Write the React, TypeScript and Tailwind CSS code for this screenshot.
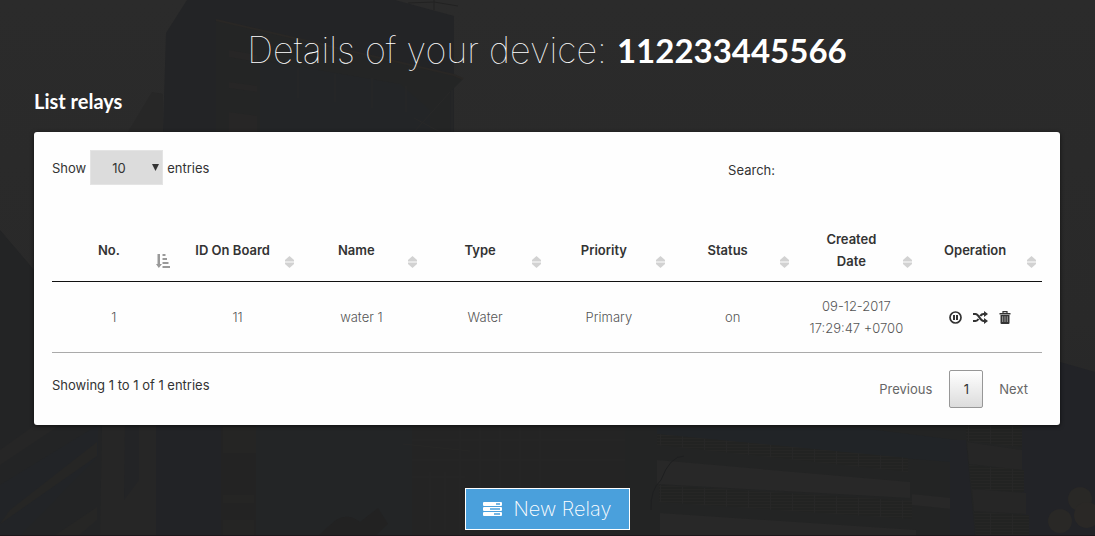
import { useState } from 'react';

type Relay = {
  no: number;
  board: number;
  name: string;
  type: string;
  priority: string;
  status: string;
  created: [string, string];
};

const relays: Relay[] = [
  {
    no: 1,
    board: 11,
    name: 'water 1',
    type: 'Water',
    priority: 'Primary',
    status: 'on',
    created: ['09-12-2017', '17:29:47 +0700'],
  },
];

const columns: string[][] = [
  ['No.'],
  ['ID On Board'],
  ['Name'],
  ['Type'],
  ['Priority'],
  ['Status'],
  ['Created', 'Date'],
  ['Operation'],
];

function Backdrop() {
  return (
    <svg
      className="absolute inset-0 -z-10 h-full w-full"
      viewBox="0 0 1095 536"
      preserveAspectRatio="xMidYMin slice"
      aria-hidden="true"
    >
      <defs>
        <linearGradient id="sky" x1="0" y1="0" x2="0" y2="1">
          <stop offset="0" stopColor="#2b2b2b" />
          <stop offset="0.6" stopColor="#292929" />
          <stop offset="1" stopColor="#242526" />
        </linearGradient>
        <pattern id="louvre" width="22" height="3" patternUnits="userSpaceOnUse">
          <rect width="22" height="3" fill="#222322" />
          <rect width="22" height="1" fill="#262625" />
          <rect width="1" height="3" fill="#272727" />
        </pattern>
      </defs>
      <rect width="1095" height="536" fill="url(#sky)" />
      <path d="M0 230 34 270V425H470V536H0Z" fill="#232425" />
      <path d="M128 132 152 92 163 94V132Z" fill="#272727" />
      <path d="M187 0H395L454 16V132H163L166 33Z" fill="#232426" />
      <path d="M216 20 454 75 463 79 450 92V132H216Z" fill="#242525" />
      <path d="M216 20 454 75 463 79" fill="none" stroke="#292725" strokeWidth="2" />
      <path d="M260 60 400 84 430 110V132H260Z" fill="#232527" />
      <path d="M229 50 257 55V62L229 57ZM229 82 257 86V92L229 88ZM229 112 257 116V132H229Z" fill="#272626" />
      <path d="M298 68V98M335 74V102M372 78V108M406 86V112M414 132 450 92M414 118 440 132M452 90V132" fill="none" stroke="#282828" />
      <path d="M408 3 434 2 458 6M434 0V10" fill="none" stroke="#222222" />
      <path d="M0 536 0 485 98 425V456L20 536Z" fill="#222427" />
      <path d="M0 465 60 425H35L0 450Z" fill="#262626" />
      <path d="M10 510 97 442V456L0 524Z" fill="#262625" />
      <path d="M54 536 97 507V520L78 536Z" fill="#262625" />
      <path d="M102 425H156V536H100Z" fill="#262626" />
      <path d="M125 425H139V480L124 500Z" fill="#232426" />
      <path d="M156 425H221V536H156Z" fill="#222326" />
      <path d="M221 425H256V536H221Z" fill="#232323" />
      <path d="M223 427H256V453H223ZM223 495H254V503H223ZM223 520H254V536H223Z" fill="#252524" />
      <path d="M256 425H412V536H256Z" fill="#232526" />
      <path d="M412 425H625V536H412Z" fill="#242424" />
      <path d="M403 444 470 451M412 477H465M430 472V530M445 472V530M460 425V536M480 425V488M500 425V488M520 425V488M540 425V488M412 440H625M412 460H625" fill="none" stroke="#272726" />
      <path d="M625 425H1095V536H625Z" fill="#232424" />
      <path d="M1060 362 1095 372V536H1022V425H1060Z" fill="#222327" />
      <path d="M657 428H860L965 441V463L900 458 657 434Z" fill="#212427" />
      <path d="M657 434 908 458V472L657 445Z" fill="url(#louvre)" />
      <path d="M657 460 910 482V498L657 484Z" fill="#282828" />
      <path d="M912 494 951 498V509L912 505Z" fill="#282828" />
      <path d="M659 485 912 501V519L659 502Z" fill="url(#louvre)" />
      <path d="M660 513 916 530V536H660Z" fill="#282828" />
      <path d="M950 440H966L975 536H950Z" fill="#222327" />
      <path d="M965 425H1022V447L967 441Z" fill="url(#louvre)" />
      <path d="M967 442 1022 450V470L969 464Z" fill="#262626" />
      <path d="M969 465 1024 470V492L972 489Z" fill="url(#louvre)" />
      <path d="M972 489 1026 493V514L974 511Z" fill="#262626" />
      <path d="M974 512 1029 515V536H976Z" fill="url(#louvre)" />
      <path d="M684 456Q670 456 661 480Q650 490 651 510" fill="none" stroke="#1e1f20" />
      <path d="M330 525Q345 510 360 522L378 508 388 524 375 536H318Z" fill="#222222" />
      <circle cx="1080" cy="499" r="12" fill="#292826" />
      <circle cx="1060" cy="521" r="12" fill="#292826" />
      <circle cx="1087" cy="515" r="13" fill="#2a2826" />
      <rect y="535" width="1095" height="1" fill="#1d171b" />
    </svg>
  );
}

function SortAscIcon() {
  return (
    <svg width="14" height="14" viewBox="0 0 14 14" fill="#999" aria-hidden="true">
      <path d="M1.500 0H4v10h2l-3.200 4L0 10h1.500zM6.500 0H9.500v2H6.500zM6.500 4h4.500v2H6.500zM6.500 8h6v2h-6zM6.500 12H14v2H6.500z" />
    </svg>
  );
}

function SortIcon() {
  return (
    <svg width="9" height="12" viewBox="0 0 9 12" fill="#d2d2d2" aria-hidden="true">
      <path d="M4.500 0 9 4v1.500H0V4zM0 6.500h9V8l-4.500 4L0 8z" />
    </svg>
  );
}

function PauseIcon() {
  return (
    <svg width="13" height="13" viewBox="0 0 13 13" aria-hidden="true">
      <circle cx="6.500" cy="6.500" r="5.500" fill="none" stroke="#333" strokeWidth="1.700" />
      <path d="M4 4h2v5H4zM7 4h2v5H7z" fill="#333" />
    </svg>
  );
}

function ShuffleIcon() {
  return (
    <svg width="15" height="13" viewBox="0 0 15 13" aria-hidden="true">
      <path d="M0 3h2.500c3.500 0 4.500 7 8 7H12M0 10h2.500c1.300 0 2.200-.8 3-2M7.300 5c.8-1.200 1.700-2 3.200-2H12" fill="none" stroke="#333" strokeWidth="2.200" />
      <path d="M11 0 15 3l-4 3zM11 7l4 3-4 3z" fill="#333" />
    </svg>
  );
}

function TrashIcon() {
  return (
    <svg width="12" height="13" viewBox="0 0 12 13" aria-hidden="true">
      <path d="M4 2V.7h4V2" fill="none" stroke="#333" strokeWidth="1.200" />
      <path d="M0.500 2h11v1.500H.5zM1.500 4h9v8q0 1-1 1h-7q-1 0-1-1z" fill="#333" />
      <path d="M3.700 5.200V11M6 5.200V11M8.300 5.200V11" stroke="#aaa" strokeWidth="0.900" />
    </svg>
  );
}

function ServerIcon() {
  return (
    <svg width="19" height="14" viewBox="0 0 19 14" aria-hidden="true">
      <path d="M1 0h17q1 0 1 1v2q0 1-1 1H1Q0 4 0 3V1q0-1 1-1zM1 5h17q1 0 1 1v2q0 1-1 1H1Q0 9 0 8V6q0-1 1-1zM1 10h17q1 0 1 1v2q0 1-1 1H1q-1 0-1-1v-2q0-1 1-1z" fill="#fff" />
      <path d="M13 1.300h4v1.400h-4zM7 6.300h10v1.400H7zM11 11.300h6v1.400h-6z" fill="#4aa0dc" />
    </svg>
  );
}

export default function App() {
  const [size, setSize] = useState('10');
  const [query, setQuery] = useState('');
  const rows = relays.filter((r) => r.name.includes(query));

  return (
    <main className="relative isolate flex min-h-screen flex-col overflow-hidden pt-7 pr-[35px] pl-[34px] font-['Inter',sans-serif] text-[13px] leading-[22px] text-[#333]">
      <Backdrop />
      <h1 className="text-center text-[36px] leading-[44px] font-thin text-white">
        Details of your device:{' '}
        <b className="font-['Lato',sans-serif] text-[33px] font-bold">112233445566</b>
      </h1>
      <h2 className="mt-4 font-['Lato',sans-serif] text-[20px] leading-[26px] font-bold text-white">
        List relays
      </h2>

      <section className="mt-[18px] rounded-[3px] bg-[#fefefe] p-[18px] pb-[17px] shadow-[0_1px_4px_rgba(0,0,0,0.6)]">
        <div className="flex items-start justify-between">
          <label className="flex items-center gap-1">
            Show
            <span className="relative">
              <select
                value={size}
                onChange={(e) => setSize(e.target.value)}
                className="block h-[35px] w-[73px] appearance-none border border-[#e4e4e4] bg-[#dcdcdc] pl-[21px]"
              >
                <option>10</option>
                <option>25</option>
                <option>50</option>
                <option>100</option>
              </select>
              <svg className="pointer-events-none absolute top-[14px] right-1 h-[7px] w-[7px]" viewBox="0 0 7 7" aria-hidden="true">
                <path d="M0 0h7L3.500 7z" fill="#333" />
              </svg>
            </span>
            entries
          </label>
          <label className="flex items-center gap-1 pt-[9px]">
            Search:
            <input
              type="search"
              value={query}
              onChange={(e) => setQuery(e.target.value)}
              className="w-[263px] bg-transparent outline-none"
            />
          </label>
        </div>

        <table className="mt-[34px] w-full table-fixed border-collapse text-center">
          <thead>
            <tr className="border-b border-[#111]">
              {columns.map((lines, i) => (
                <th key={lines[0]} scope="col" className="relative py-[9px] pr-[18px] pl-2 font-semibold">
                  {lines.map((line) => (
                    <span key={line} className="block">
                      {line}
                    </span>
                  ))}
                  <span className="absolute right-[6px] bottom-[13px]">
                    {i === 0 ? <SortAscIcon /> : <SortIcon />}
                  </span>
                </th>
              ))}
            </tr>
          </thead>
          <tbody className="font-light text-[#555]">
            {rows.map((r) => (
              <tr key={r.no} className="border-b border-[#aaa]">
                <td className="py-[13px]">{r.no}</td>
                <td>{r.board}</td>
                <td>{r.name}</td>
                <td>{r.type}</td>
                <td>{r.priority}</td>
                <td>{r.status}</td>
                <td className="py-[13px]">
                  {r.created[0]}
                  <br />
                  {r.created[1]}
                </td>
                <td>
                  <div className="flex items-center justify-center gap-[11px]">
                    <button type="button" aria-label="Pause">
                      <PauseIcon />
                    </button>
                    <button type="button" aria-label="Switch">
                      <ShuffleIcon />
                    </button>
                    <button type="button" aria-label="Delete">
                      <TrashIcon />
                    </button>
                  </div>
                </td>
              </tr>
            ))}
          </tbody>
        </table>

        <div className="mt-[17px] flex items-start justify-between">
          <p className="pt-1">Showing 1 to 1 of 1 entries</p>
          <nav className="flex items-center text-[#666]">
            <button type="button" className="px-[17px]">
              Previous
            </button>
            <button
              type="button"
              className="h-[38px] w-[34px] rounded-[2px] border border-[#979797] bg-linear-to-b from-white to-[#dcdcdc] text-[#333]"
            >
              1
            </button>
            <button type="button" className="pr-[14px] pl-4">
              Next
            </button>
          </nav>
        </div>
      </section>

      <button
        type="button"
        className="mt-[63px] mb-[6px] flex h-[42px] items-center gap-3 self-center border border-white bg-[#4aa0dc] px-[17px] text-[20px] font-extralight text-white"
      >
        <ServerIcon />
        New Relay
      </button>
    </main>
  );
}
